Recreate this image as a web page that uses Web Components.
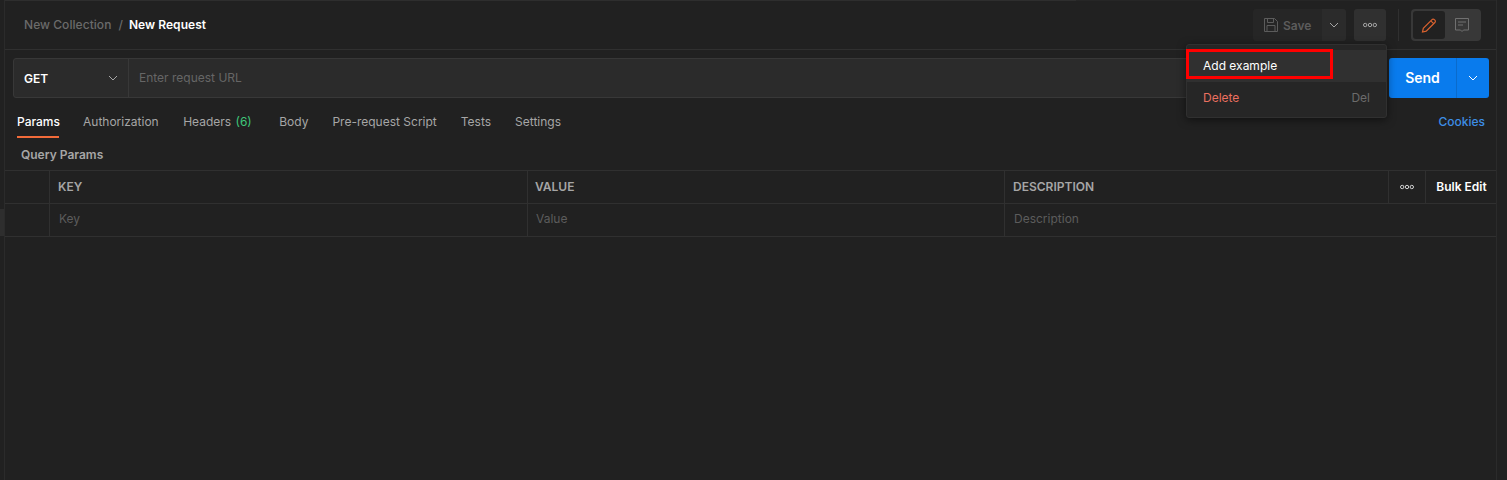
<!DOCTYPE html>
<html>
<head>
<meta charset="utf-8">
<style>
  html, body { margin: 0; height: 100%; background: #212121; overflow: hidden; }
  body { font-family: Inter, "Liberation Sans", sans-serif; font-size: 12px; color: #a6a6a6; }
</style>
</head>
<body>
<request-pane>
  <request-head></request-head>
  <url-bar></url-bar>
  <request-tabs></request-tabs>
  <params-table></params-table>
  <more-menu></more-menu>
</request-pane>

<script>
const CHEVRON = `<svg width="10" height="10" viewBox="0 0 10 10" fill="none" stroke="currentColor" stroke-width="1"><path d="M1 3l4 4 4-4"/></svg>`;
const DOTS = `<svg width="14" height="6" viewBox="0 0 14 6" fill="none" stroke="currentColor" stroke-width="1"><circle cx="2.2" cy="3" r="1.7"/><circle cx="7" cy="3" r="1.7"/><circle cx="11.8" cy="3" r="1.7"/></svg>`;

class RequestPane extends HTMLElement {
  constructor() {
    super();
    const shadow = this.attachShadow({ mode: 'open' });
    shadow.innerHTML = `
      <style>
        :host {
          display: flex;
          flex-direction: column;
          position: relative;
          box-sizing: border-box;
          height: 480px;
          width: 1493px;
          margin-left: 4px;
          border-left: 1px solid #2b2b2b;
          border-right: 1px solid #2b2b2b;
        }
        .top { height: 1px; background: linear-gradient(to right, #2e2e2e 1071px, #262626 1071px); }
        .grip { position: absolute; left: -5px; top: 209px; width: 4px; height: 27px; background: #2e2e2e; }
      </style>
      <div class="top"></div>
      <div class="grip"></div>
      <slot></slot>`;
  }
}

class RequestHead extends HTMLElement {
  constructor() {
    super();
    const shadow = this.attachShadow({ mode: 'open' });
    shadow.innerHTML = `
      <style>
        :host {
          display: flex;
          align-items: center;
          box-sizing: border-box;
          height: 49px;
          padding: 0 15px 0 19px;
          border-bottom: 1px solid #303030;
          font-size: 12px;
          font-weight: 500;
        }
        .crumbs { flex: 1; display: flex; gap: 7px; color: #6b6b6b; padding-bottom: 1px; letter-spacing: .05px; }
        .crumbs b { color: #fff; font-weight: 600; margin-left: -1px; }
        .save {
          display: flex; align-items: center; gap: 4px;
          box-sizing: border-box; width: 69px; height: 32px; padding-left: 10px;
          background: #262626; color: #5c5c5c; font-weight: 600;
          border-radius: 3px 0 0 3px;
        }
        .caret {
          display: flex; align-items: center; justify-content: center;
          width: 24px; height: 32px; background: #2b2b2b; color: #a6a6a6;
          border-radius: 0 3px 3px 0;
        }
        .more {
          display: flex; align-items: center; justify-content: center;
          width: 32px; height: 32px; margin-left: 8px;
          background: #303030; color: #a6a6a6; border-radius: 3px;
        }
        .sep { width: 1px; height: 32px; background: #303030; margin: 0 12px; }
        .toggle {
          display: flex; align-items: center; box-sizing: border-box;
          width: 70px; height: 32px; padding: 2px;
          background: #383838; border-radius: 4px;
        }
        .toggle span { display: flex; align-items: center; justify-content: center; width: 32px; height: 28px; border-radius: 3px; }
        .toggle .on { background: #212121; }
        .toggle .off { color: #707070; }
      </style>
      <div class="crumbs"><span>New Collection</span><span>/</span><b>New Request</b></div>
      <div class="save">
        <svg width="16" height="16" viewBox="0 0 16 16" fill="none" stroke="currentColor" stroke-width="1"><path d="M1.500 1.500h10l3 3v10h-13z"/><path d="M4.500 1.500v4h6v-4M4 14.500v-6h8v6"/></svg>
        <span>Save</span>
      </div>
      <div class="caret">${CHEVRON}</div>
      <div class="more">${DOTS}</div>
      <div class="sep"></div>
      <div class="toggle">
        <span class="on"><svg width="16" height="16" viewBox="0 0 16 16" fill="none" stroke="#d9622f" stroke-width="1.2"><path d="M1.500 15l.8-3.700 8.700-8.700a1.600 1.600 0 0 1 2.300 0l.6.6a1.600 1.600 0 0 1 0 2.300l-8.700 8.700z"/><path d="M9.800 3.800l2.900 2.900"/></svg></span>
        <span class="off"><svg width="16" height="16" viewBox="0 0 16 16" fill="none" stroke="currentColor" stroke-width="1"><path d="M2.500 1.500h13v11.500h-5l-1.500 1.500-1.500-1.500h-5z"/><path d="M5 5h8M5 8h5"/></svg></span>
      </div>`;
  }
}

class UrlBar extends HTMLElement {
  constructor() {
    super();
    const shadow = this.attachShadow({ mode: 'open' });
    shadow.innerHTML = `
      <style>
        :host {
          display: flex;
          height: 40px;
          margin: 8px 7px 0 8px;
          gap: 4px;
        }
        .field {
          flex: 1; display: flex; box-sizing: border-box;
          background: #2b2b2b; border: 1px solid #383838; border-radius: 3px;
        }
        .method {
          display: flex; align-items: center; justify-content: space-between;
          box-sizing: border-box; width: 115px; padding: 0 10px;
          border-right: 1px solid #383838;
          color: #fff; font-weight: 600;
        }
        .method svg { color: #a6a6a6; }
        .input { padding-left: 10px; line-height: 38px; color: #666; }
        .send {
          display: flex; width: 100px; color: #fff;
          background: #097bed; border-radius: 3px; font-weight: 600; font-size: 14px;
        }
        .send span { display: flex; align-items: center; justify-content: center; }
        .send .label { width: 67px; padding-bottom: 1px; }
        .send .drop { flex: 1; border-left: 1px solid #0a6bcc; }
      </style>
      <div class="field">
        <div class="method"><span>GET</span>${CHEVRON}</div>
        <div class="input">Enter request URL</div>
      </div>
      <div class="send"><span class="label">Send</span><span class="drop">${CHEVRON}</span></div>`;
  }
}

class RequestTabs extends HTMLElement {
  constructor() {
    super();
    const shadow = this.attachShadow({ mode: 'open' });
    const names = ['Authorization', 'Headers <i>(6)</i>', 'Body', 'Pre-request Script', 'Tests', 'Settings'];
    shadow.innerHTML = `
      <style>
        :host {
          display: flex;
          box-sizing: border-box;
          height: 40px;
          padding: 8px 11px 0 12px;
          font-size: 12px;
          color: #a6a6a6;
        }
        .tab { height: 32px; line-height: 32px; margin-right: 24px; box-sizing: border-box; }
        .tab.active { color: #fff; font-weight: 500; border-bottom: 2px solid #f26b3a; width: 42px; white-space: nowrap; }
        .tab i { font-style: normal; color: #3fc67a; margin-left: 1px; margin-right: 3.500px; }
        .tab:nth-child(3) { margin-right: 24.500px; }
        .cookies { margin-left: auto; line-height: 32px; color: #3d8ee6; font-weight: 500; }
      </style>
      <div class="tab active">Params</div>
      ${names.map((n) => `<div class="tab">${n}</div>`).join('')}
      <div class="cookies">Cookies</div>`;
  }
}

class ParamsTable extends HTMLElement {
  constructor() {
    super();
    const shadow = this.attachShadow({ mode: 'open' });
    shadow.innerHTML = `
      <style>
        :host { display: block; }
        .title { height: 32px; padding-left: 16px; line-height: 34px; font-weight: 600; color: #a6a6a6; }
        .row {
          display: grid;
          grid-template-columns: 44px 478px 477px 384px 37px 1fr;
          height: 33px;
          box-sizing: border-box;
          border-top: 1px solid #303030;
        }
        .row:last-child { border-bottom: 1px solid #303030; height: 34px; }
        .row > div { border-left: 1px solid #303030; padding-left: 8px; line-height: 32px; box-sizing: border-box; }
        .row > div:first-child { border-left: 0; }
        .head { font-weight: 600; color: #a6a6a6; }
        .head > div:nth-child(3) { padding-left: 7px; }
        .head .dots { display: flex; align-items: center; justify-content: center; padding: 0; color: #d0d0d0; }
        .head .bulk { padding: 0 0 0 1px; text-align: center; color: #fff; }
        .body { color: #5c5c5c; }
        .body > div { padding-left: 9px; line-height: 30px; }
        .body > div:nth-child(3) { padding-left: 8px; }
      </style>
      <div class="title">Query Params</div>
      <div class="row head"><div></div><div>KEY</div><div>VALUE</div><div>DESCRIPTION</div><div class="dots">${DOTS}</div><div class="bulk">Bulk Edit</div></div>
      <div class="row body"><div></div><div>Key</div><div>Value</div><div>Description</div></div>`;
  }
}

class MoreMenu extends HTMLElement {
  constructor() {
    super();
    const shadow = this.attachShadow({ mode: 'open' });
    shadow.innerHTML = `
      <style>
        :host {
          position: absolute;
          top: 44px;
          left: 1181px;
          width: 201px;
          box-sizing: border-box;
          padding: 5px 0 3px;
          background: #262626;
          border: 1px solid #303030;
          border-radius: 3px;
          box-shadow: 0 2px 8px rgba(0, 0, 0, .5);
        }
        .item { display: flex; justify-content: space-between; height: 32px; line-height: 32px; padding: 0 16px; color: #fff; }
        .item.hi { background: #303030; }
        .item.danger { color: #eb6f5f; }
        .item kbd { font: inherit; color: #6b6b6b; }
        .mark {
          position: absolute; left: -1px; top: 4px; width: 147px; height: 30px;
          box-sizing: border-box; border: 3px solid #f00;
        }
      </style>
      <div class="item hi">Add example</div>
      <div class="item danger">Delete<kbd>Del</kbd></div>
      <div class="mark"></div>`;
  }
}

customElements.define('request-pane', RequestPane);
customElements.define('request-head', RequestHead);
customElements.define('url-bar', UrlBar);
customElements.define('request-tabs', RequestTabs);
customElements.define('params-table', ParamsTable);
customElements.define('more-menu', MoreMenu);
</script>
</body>
</html>
